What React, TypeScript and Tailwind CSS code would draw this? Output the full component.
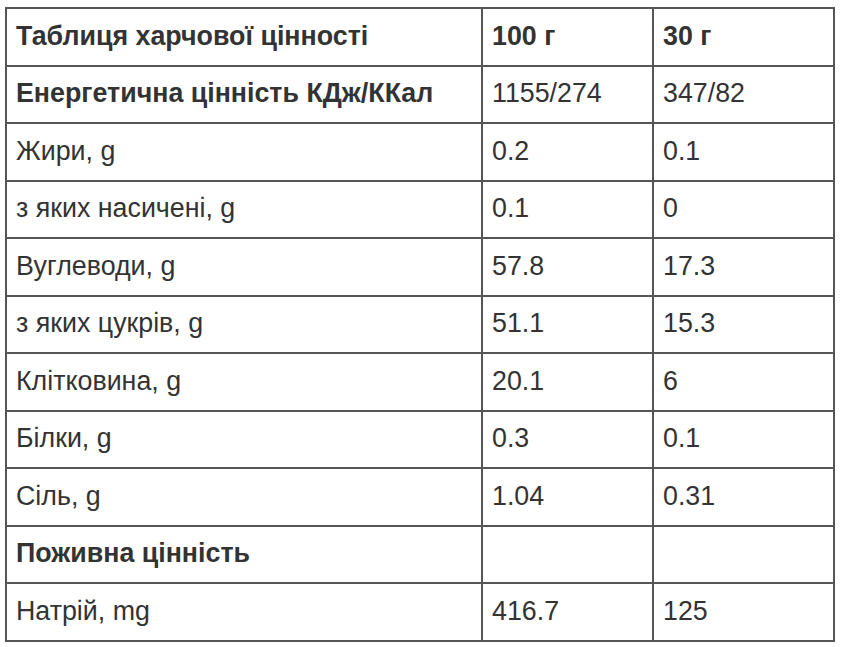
const rows = [
  { name: 'Енергетична цінність КДж/ККал', a: '1155/274', b: '347/82', bold: true },
  { name: 'Жири, g', a: '0.2', b: '0.1' },
  { name: 'з яких насичені, g', a: '0.1', b: '0' },
  { name: 'Вуглеводи, g', a: '57.8', b: '17.3' },
  { name: 'з яких цукрів, g', a: '51.1', b: '15.3' },
  { name: 'Клітковина, g', a: '20.1', b: '6' },
  { name: 'Білки, g', a: '0.3', b: '0.1' },
  { name: 'Сіль, g', a: '1.04', b: '0.31' },
  { name: 'Поживна цінність', a: '', b: '', bold: true },
  { name: 'Натрій, mg', a: '416.7', b: '125' },
];

export default function App() {
  return (
    <div className="bg-white min-h-screen pt-[7px] pl-[5px] font-['Liberation_Sans',Arial,sans-serif] text-[#333]">
      <table className="border-collapse w-[830px] text-[26.8px] leading-[30px]">
        <thead>
          <tr className="h-[57.5px]">
            <th className="border-2 border-[#555] text-left font-bold pl-[9px] pb-[2px] w-[476px]">Таблиця харчової цінності</th>
            <th className="border-2 border-[#555] text-left font-bold pl-[9px] pb-[2px] w-[171px]">100 г</th>
            <th className="border-2 border-[#555] text-left font-bold pl-[9px] pb-[2px]">30 г</th>
          </tr>
        </thead>
        <tbody>
          {rows.map((r, i) => (
            <tr key={i} className="h-[57.5px]">
              <td className={`border-2 border-[#555] pl-[9px] pb-[2px] ${r.bold ? 'font-bold' : ''}`}>{r.name}</td>
              <td className="border-2 border-[#555] pl-[9px] pb-[2px]">{r.a}</td>
              <td className="border-2 border-[#555] pl-[9px] pb-[2px]">{r.b}</td>
            </tr>
          ))}
        </tbody>
      </table>
    </div>
  );
}
